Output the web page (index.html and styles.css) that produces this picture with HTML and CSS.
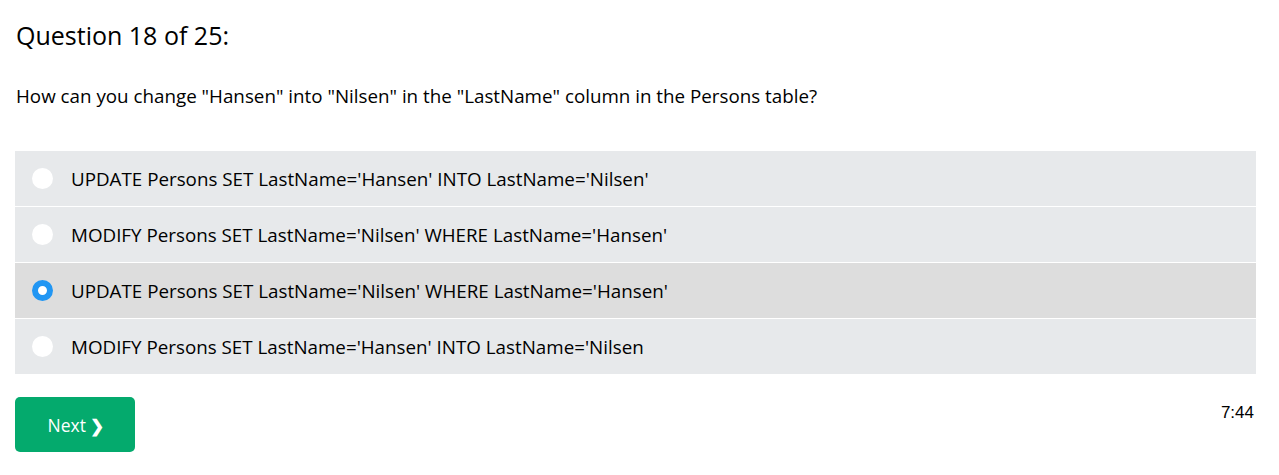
FILE: index.html
```html
<!DOCTYPE html>
<html>
<head>
<meta charset="utf-8">
<link rel="stylesheet" href="styles.css">
</head>
<body>
<div class="quiz">
  <h2 class="qnum">Question 18 of 25:</h2>
  <p class="qtext">How can you change "Hansen" into "Nilsen" in the "LastName" column in the Persons table?</p>
  <div class="options">
    <label class="opt"><span class="radio"></span><span class="otext">UPDATE Persons SET LastName='Hansen' INTO LastName='Nilsen'</span></label>
    <label class="opt"><span class="radio"></span><span class="otext">MODIFY Persons SET LastName='Nilsen' WHERE LastName='Hansen'</span></label>
    <label class="opt selected"><span class="radio checked"></span><span class="otext">UPDATE Persons SET LastName='Nilsen' WHERE LastName='Hansen'</span></label>
    <label class="opt"><span class="radio"></span><span class="otext">MODIFY Persons SET LastName='Hansen' INTO LastName='Nilsen</span></label>
  </div>
  <div class="footer">
    <button class="next">Next <span class="chev">❯</span></button>
    <span class="timer">7:44</span>
  </div>
</div>
</body>
</html>
```
FILE: styles.css
```css
html, body { margin: 0; padding: 0; background: #fff; }
body { font-family: "Open Sans", "Noto Sans", sans-serif; color: #000; }
.quiz { padding: 0 23px 0 15px; }
.qnum { margin: 0; padding-top: 19px; font-size: 25px; font-weight: 400; line-height: 32px; padding-left: 1px; }
.qtext { margin: 0; padding-top: 33px; font-size: 18.8px; line-height: 24px; padding-left: 1px; }
.options { margin-top: 43px; display: flex; flex-direction: column; gap: 1px; }
.opt { display: flex; align-items: center; height: 55px; background: #e7e9eb; font-size: 18.8px; }
.opt.selected { background: #dddddd; }
.radio { width: 21px; height: 21px; border-radius: 50%; background: #fff; margin-left: 17px; margin-right: 18px; box-sizing: border-box; flex: none; }
.radio.checked { background: #fff; border: 6px solid #2196f3; }
.footer { display: flex; justify-content: space-between; align-items: flex-start; margin-top: 23px; }
.next { width: 120px; height: 55px; background: #04aa6d; color: #fff; border: none; border-radius: 5px; font-family: "Open Sans", sans-serif; font-size: 17.5px; padding: 0 0 0 2px; }
.chev { font-size: 17px; font-weight: 700; }
.timer { font-family: "Liberation Sans", Arial, sans-serif; font-size: 17px; margin-top: 6px; margin-right: 2px; }
```
